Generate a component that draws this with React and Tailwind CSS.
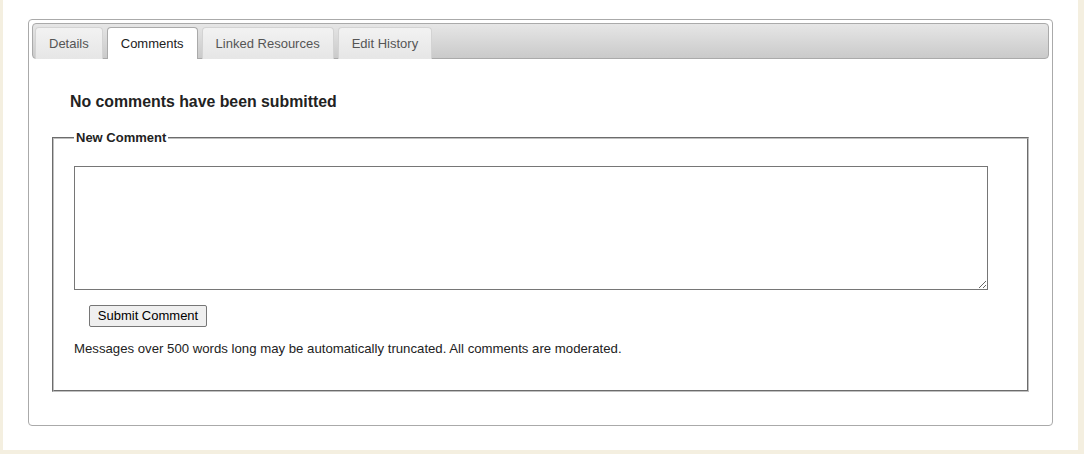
const tabs = ['Details', 'Comments', 'Linked Resources', 'Edit History'];

export default function App() {
  const active = 'Comments';

  return (
    <div className="h-[454px] w-full bg-[#f4efe0] pl-[3px] pr-[6px] pb-[4px] font-['Liberation_Sans',Arial,sans-serif] text-[13px] text-[#222]">
      <div className="h-full bg-white px-[25px] pt-[19px]">
        <div className="h-[407px] rounded-[4px] border border-[#aaaaaa] p-[3px]">
          <ul className="flex h-[36px] gap-[4px] rounded-[4px] border border-[#aaaaaa] bg-gradient-to-b from-[#e6e6e6] to-[#cacaca] px-[2px] pt-[3px]">
            {tabs.map((tab) => {
              const isActive = tab === active;
              return (
                <li
                  key={tab}
                  className={`mb-[-1px] flex h-[32px] items-center rounded-t-[4px] border border-b-0 px-[13px] ${
                    isActive
                      ? 'border-[#aaaaaa] bg-white text-[#212121]'
                      : 'border-[#d3d3d3] bg-gradient-to-b from-[#f2f2f2] to-[#e6e6e6] text-[#555555]'
                  }`}
                >
                  {tab}
                </li>
              );
            })}
          </ul>

          <div className="px-[20px] pt-[33px]">
            <h3 className="ml-[18px] text-[15.85px] font-bold leading-[19px] text-[#222]">
              No comments have been submitted
            </h3>

            <fieldset className="mt-[19px] h-[262px] border-2 border-[#c0c0c0] px-[20px] [border-style:groove]">
              <legend className="px-[2px] text-[13px] font-bold leading-[15px]">New Comment</legend>
              <textarea className="mt-[21px] block h-[124px] w-[914px] border border-[#767676] bg-white"></textarea>
              <button
                type="button"
                className="ml-[15px] mt-[15px] h-[22px] w-[118px] rounded-[2px] border border-[#767676] bg-[#efefef] text-[13px] text-black"
              >
                Submit Comment
              </button>
              <p className="mt-[14px] text-[13.2px] leading-[15px] text-[#222]">
                Messages over 500 words long may be automatically truncated. All comments are moderated.
              </p>
            </fieldset>
          </div>
        </div>
      </div>
    </div>
  );
}
